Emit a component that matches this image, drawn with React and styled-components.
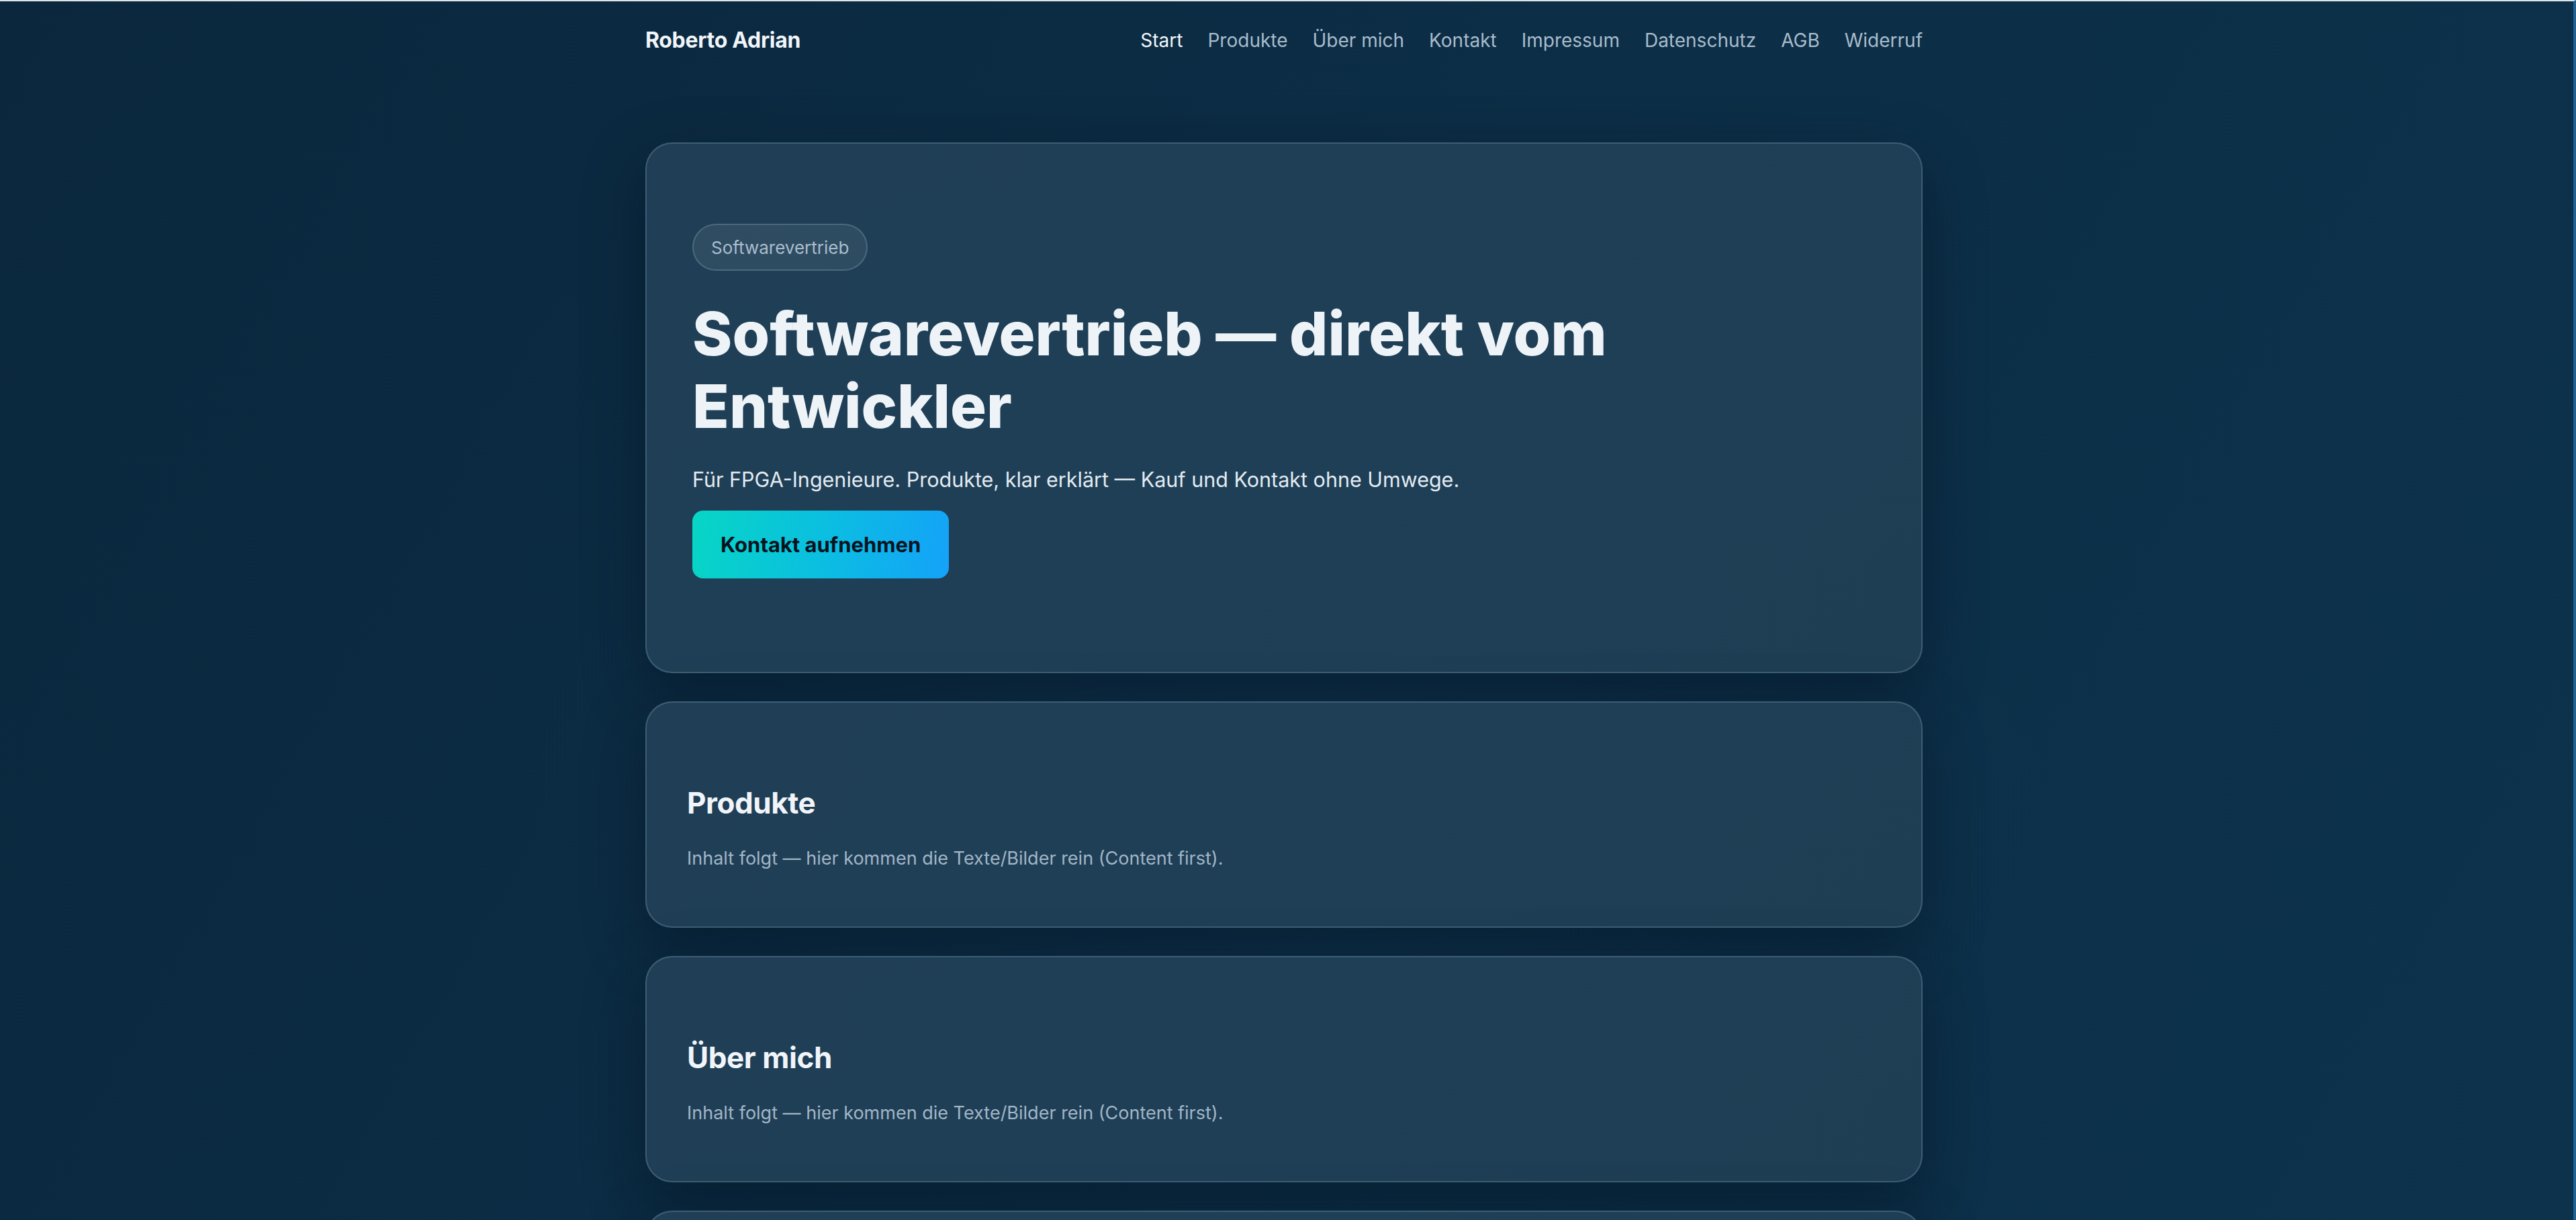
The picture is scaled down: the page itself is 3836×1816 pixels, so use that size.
import React from 'react';
import styled, { createGlobalStyle } from 'styled-components';

const GlobalStyle = createGlobalStyle`
  html, body { margin: 0; padding: 0; }
  body {
    background: #0b2a41;
    font-family: Inter, "Noto Sans", "Liberation Sans", sans-serif;
    -webkit-font-smoothing: antialiased;
  }
  * { box-sizing: border-box; }
`;

const Page = styled.div`
  min-height: 1816px;
  border-top: 2px solid #dfe4e8;
  border-right: 4px solid #1f6394;
  padding-right: 8px;
  padding-bottom: 80px;
  background:
    radial-gradient(ellipse 1600px 1000px at 50% 45%, rgba(22, 60, 88, 0.35), transparent 70%),
    linear-gradient(120deg, #0a273d 0%, #0c2e46 45%, #0d334d 100%);
`;

const Container = styled.div`
  width: 1902px;
  margin: 0 auto;
`;

const Header = styled.header`
  display: flex;
  align-items: center;
  justify-content: space-between;
  padding-top: 34px;
  height: 82px;
`;

const Logo = styled.a`
  font-size: 32px;
  line-height: 48px;
  font-weight: 700;
  color: #f1f5f9;
  letter-spacing: -0.01em;
  text-decoration: none;
`;

const Nav = styled.nav`
  display: flex;
  align-items: center;
  gap: 37px;
`;

const NavLink = styled.a`
  font-size: 28px;
  line-height: 48px;
  font-weight: 400;
  color: ${p => (p.$active ? '#f4f7fa' : '#a9bccd')};
  text-decoration: none;
`;

const Main = styled.main`
  display: flex;
  flex-direction: column;
  gap: 42px;
  margin-top: 128px;
`;

const Card = styled.section`
  border: 2px solid rgba(140, 175, 205, 0.28);
  border-radius: 40px;
  background: linear-gradient(135deg, #203f56 0%, #1e3f56 50%, #1e3e54 100%);
  box-shadow: 0 30px 90px rgba(3, 14, 26, 0.45);
`;

const HeroCard = styled(Card)`
  padding: 119px 68px 139px;
  display: flex;
  flex-direction: column;
  align-items: flex-start;
`;

const Badge = styled.span`
  display: inline-flex;
  align-items: center;
  height: 70px;
  padding: 0 26px;
  border-radius: 999px;
  border: 2px solid rgba(160, 190, 215, 0.25);
  background: rgba(255, 255, 255, 0.07);
  color: #a9bdcf;
  font-size: 26px;
`;

const Title = styled.h1`
  margin: 40px 0 0;
  font-size: 90px;
  line-height: 108px;
  font-weight: 800;
  letter-spacing: 0;
  color: #eef3f8;
  max-width: 1500px;
`;

const Lead = styled.p`
  margin: 30px 0 0;
  font-size: 30.5px;
  line-height: 50px;
  color: #e3ebf2;
`;

const Button = styled.a`
  margin-top: 21px;
  display: inline-flex;
  align-items: center;
  height: 101px;
  padding: 0 42px;
  border-radius: 16px;
  background: linear-gradient(100deg, #07d6c5 0%, #0bbfe0 50%, #14a2f9 100%);
  color: #04141f;
  font-size: 31px;
  font-weight: 700;
  text-decoration: none;
`;

const SectionCard = styled(Card)`
  padding: 122px 60px 80px;
`;

const SectionTitle = styled.h2`
  margin: 0 0 34px;
  font-size: 44px;
  line-height: 54px;
  font-weight: 700;
  letter-spacing: -0.01em;
  color: #f1f5f9;
`;

const SectionText = styled.p`
  margin: 0;
  font-size: 27px;
  line-height: 43px;
  color: #a2b5c7;
`;

const navItems = ['Start', 'Produkte', 'Über mich', 'Kontakt', 'Impressum', 'Datenschutz', 'AGB', 'Widerruf'];
const sections = ['Produkte', 'Über mich', 'Kontakt', 'Impressum'];

export default function App() {
  return (
    <>
      <GlobalStyle />
      <Page>
        <Container>
          <Header>
            <Logo href="#">Roberto Adrian</Logo>
            <Nav>
              {navItems.map((n, i) => (
                <NavLink key={n} href="#" $active={i === 0}>{n}</NavLink>
              ))}
            </Nav>
          </Header>
          <Main>
            <HeroCard>
              <Badge>Softwarevertrieb</Badge>
              <Title>Softwarevertrieb — direkt vom Entwickler</Title>
              <Lead>Für FPGA-Ingenieure. Produkte, klar erklärt — Kauf und Kontakt ohne Umwege.</Lead>
              <Button href="#">Kontakt aufnehmen</Button>
            </HeroCard>
            {sections.map(s => (
              <SectionCard key={s}>
                <SectionTitle>{s}</SectionTitle>
                <SectionText>Inhalt folgt — hier kommen die Texte/Bilder rein (Content first).</SectionText>
              </SectionCard>
            ))}
          </Main>
        </Container>
      </Page>
    </>
  );
}
